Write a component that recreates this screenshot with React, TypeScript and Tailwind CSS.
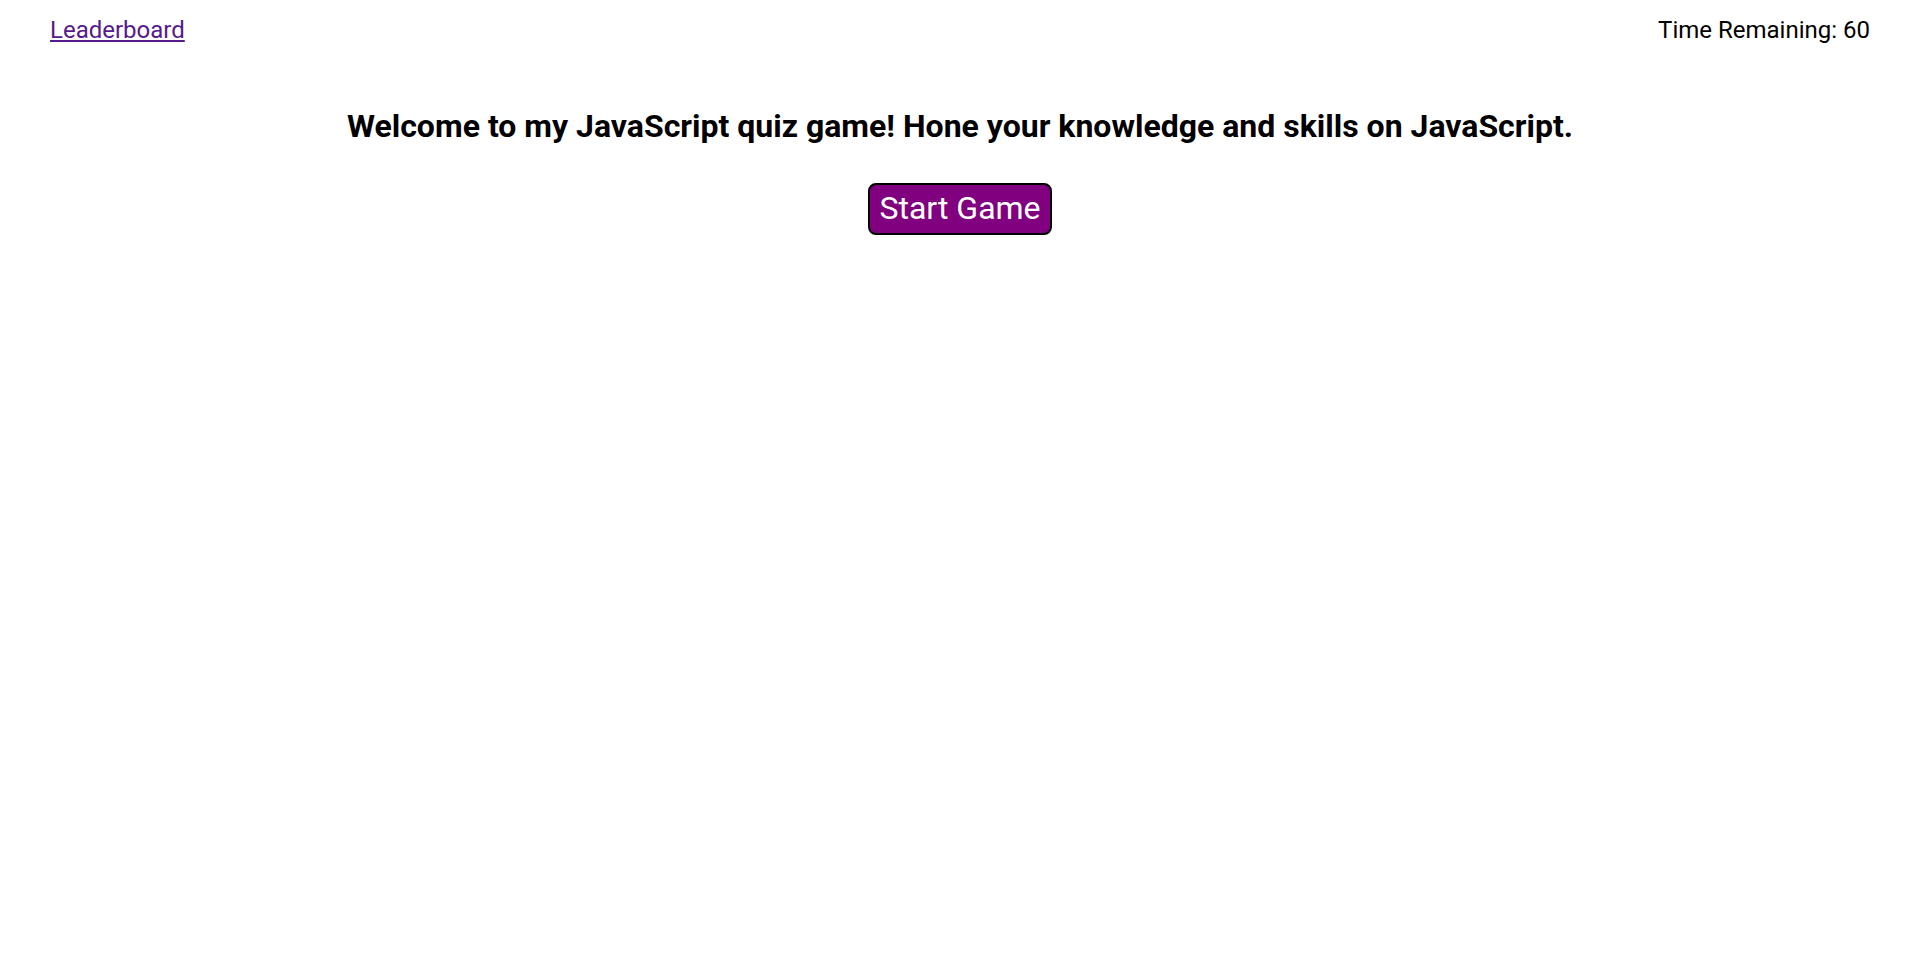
export default function App() {
  return (
    <div className="min-h-[967px] bg-white text-black font-['Roboto',sans-serif]">
      <header className="flex justify-between items-start pl-[50px] pr-[50px] pt-[16px]">
        <a href="#" className="text-[24px] leading-[28px] text-[#551a8b] underline">
          Leaderboard
        </a>
        <span className="text-[24px] leading-[28px]">Time Remaining: 60</span>
      </header>
      <main className="flex flex-col items-center">
        <h1 className="mt-[64px] text-[32px] leading-[36px] font-bold">
          Welcome to my JavaScript quiz game! Hone your knowledge and skills on JavaScript.
        </h1>
        <button className="mt-[39px] w-[184px] h-[52px] pb-[3px] flex items-center justify-center bg-[#800080] text-white text-[32px] leading-[36px] border-2 border-black rounded-[8px]">
          Start Game
        </button>
      </main>
    </div>
  );
}
